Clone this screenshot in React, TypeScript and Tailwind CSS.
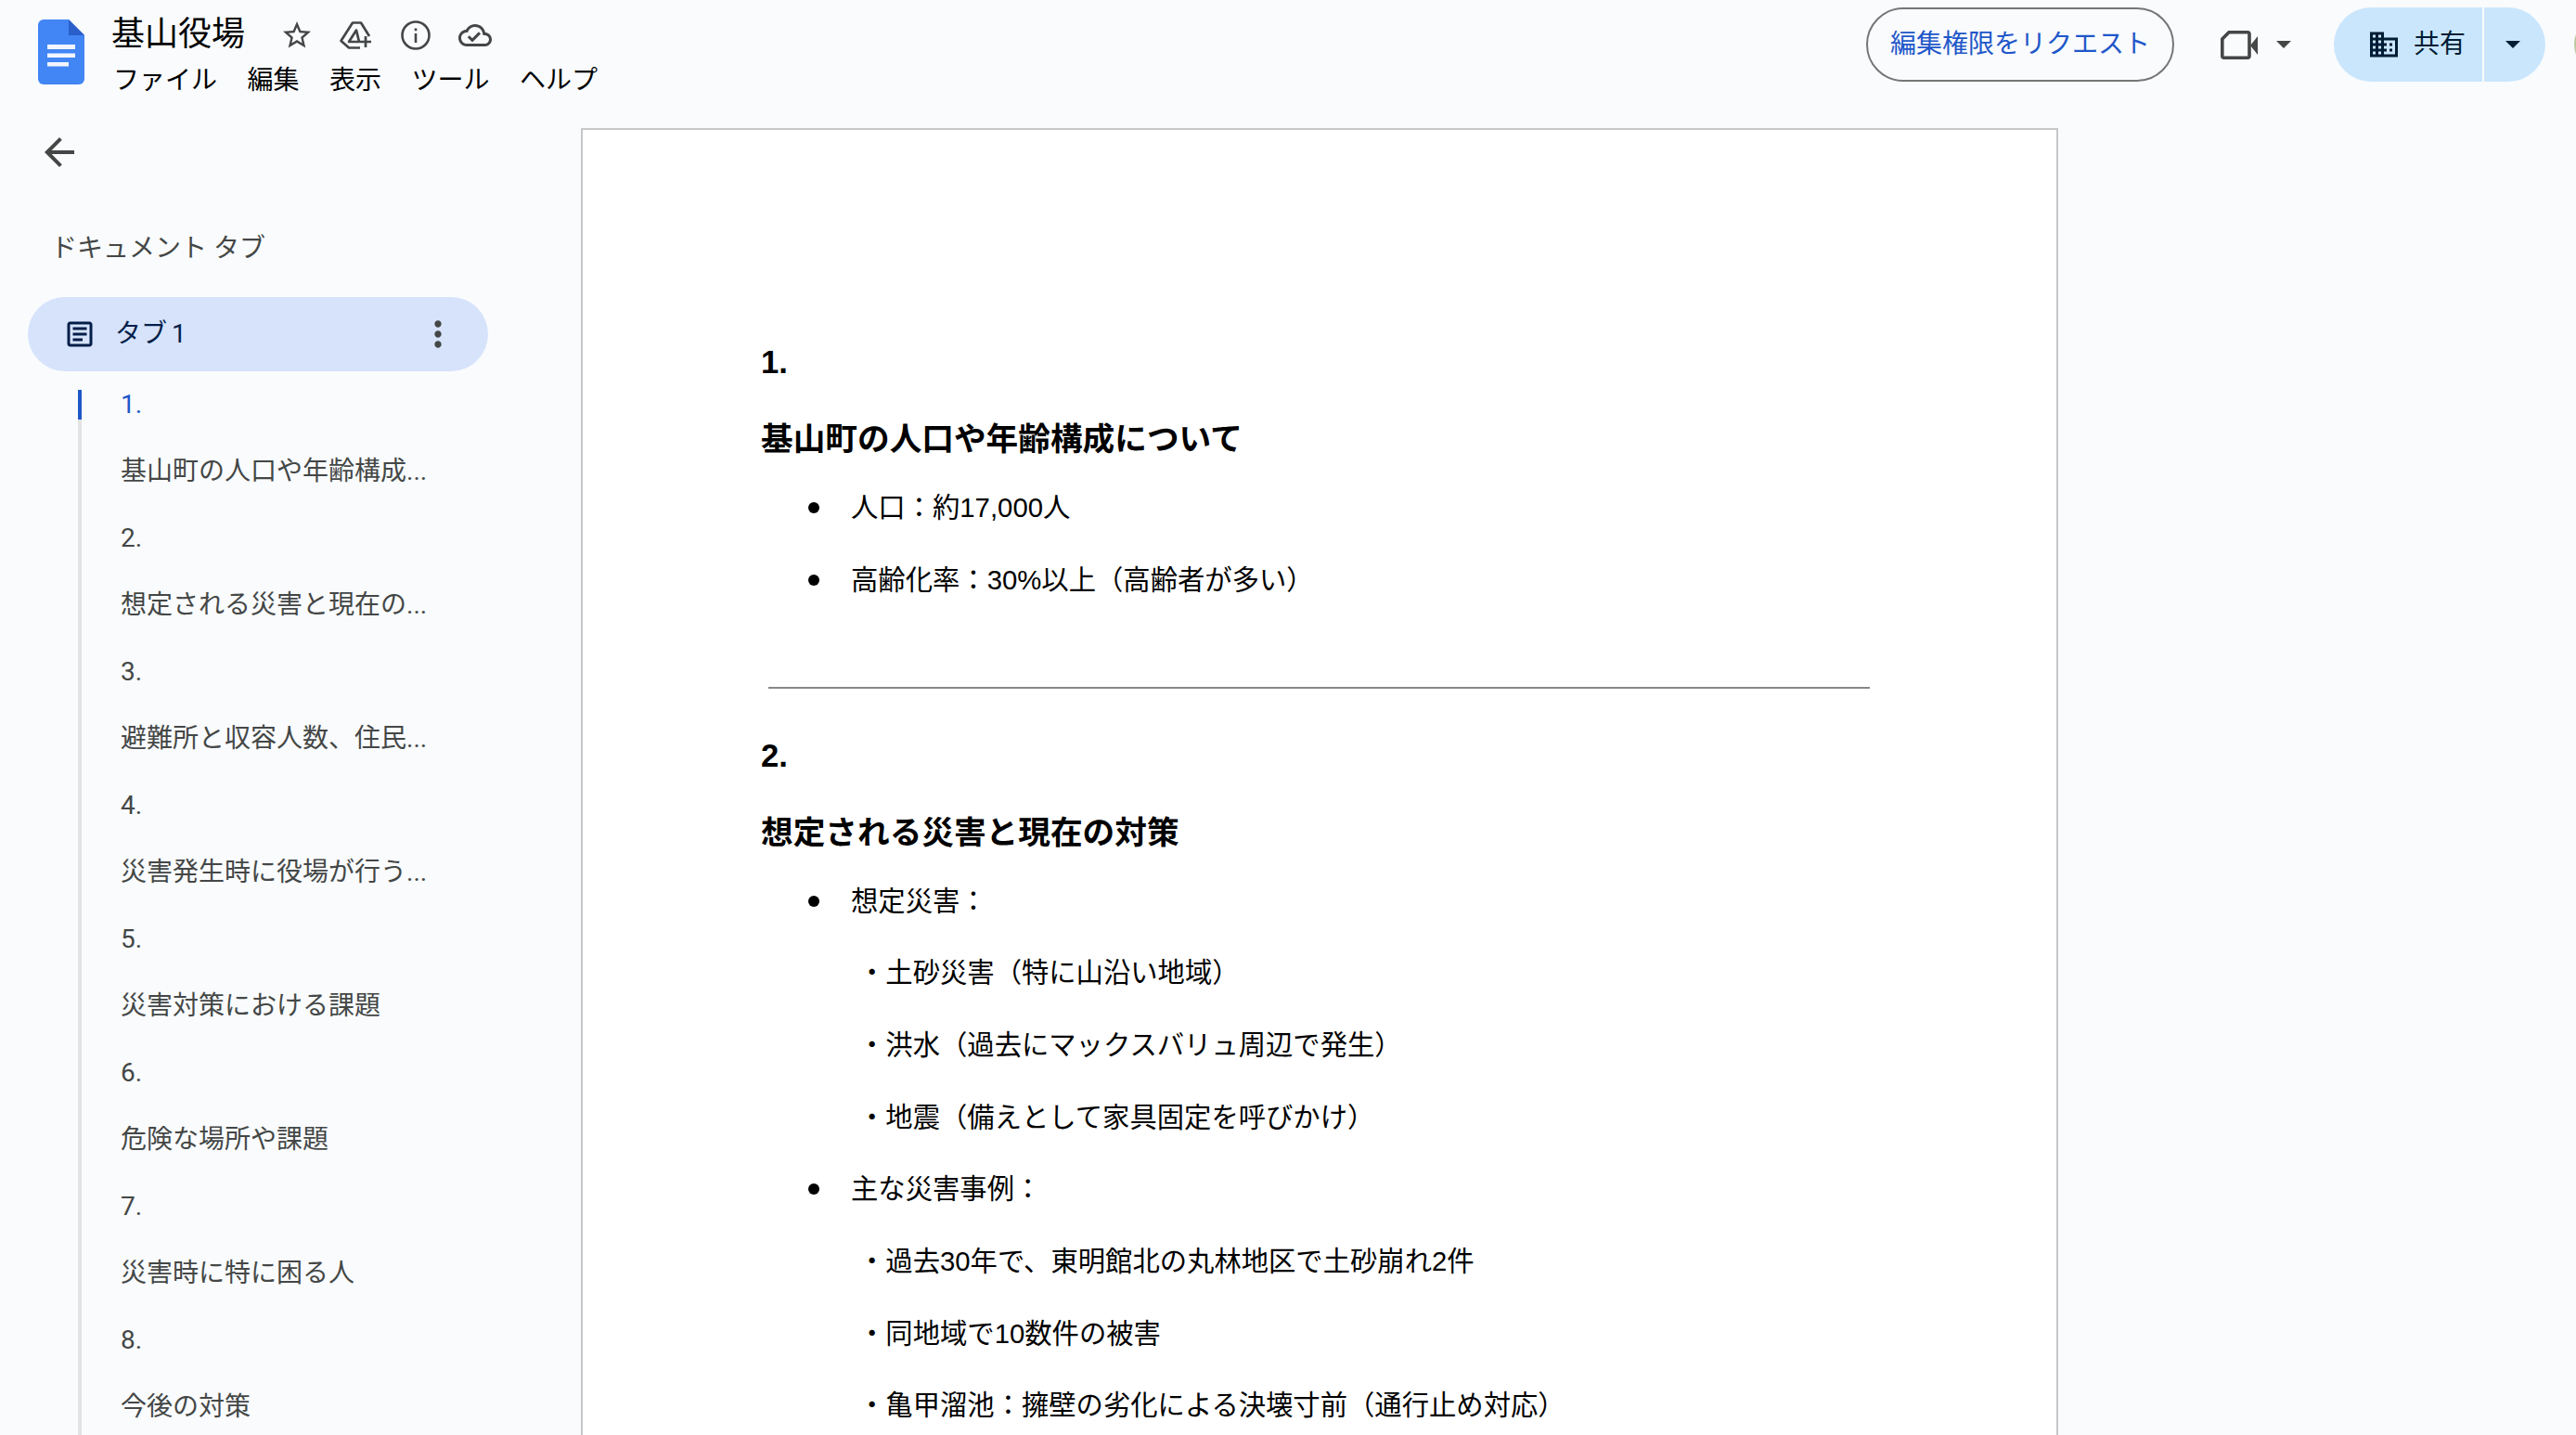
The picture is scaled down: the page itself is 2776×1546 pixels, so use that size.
const outline = [
  "1.",
  "基山町の人口や年齢構成...",
  "2.",
  "想定される災害と現在の...",
  "3.",
  "避難所と収容人数、住民...",
  "4.",
  "災害発生時に役場が行う...",
  "5.",
  "災害対策における課題",
  "6.",
  "危険な場所や課題",
  "7.",
  "災害時に特に困る人",
  "8.",
  "今後の対策",
];

const menus = ["ファイル", "編集", "表示", "ツール", "ヘルプ"];

function DocsLogo() {
  return (
    <svg viewBox="0 0 50 70" className="w-[50px] h-[70px] shrink-0">
      <path d="M0 6a6 6 0 0 1 6-6h27l17 17v47a6 6 0 0 1-6 6H6a6 6 0 0 1-6-6z" fill="#4285f4" />
      <path d="M33 0v17h17z" fill="#2a5fcb" />
      <path d="M10 27h30v5H10zM10 36.500h30v4.500H10zM10 46h23v4.500H10z" fill="#f1f5fe" />
    </svg>
  );
}

function Caret({ className }: { className: string }) {
  return (
    <svg viewBox="0 0 16 8" className={`w-4 h-2 shrink-0 ${className}`}>
      <path d="M0 0h16l-8 8z" fill="currentColor" />
    </svg>
  );
}

function Bullet({ children }: { children: string }) {
  return (
    <li className="flex items-center h-10 mb-[37.67px] pl-[51px]">
      <span className="w-3 h-3 rounded-full bg-black shrink-0" />
      <span className="ml-[34px]">{children}</span>
    </li>
  );
}

function SubItem({ children }: { children: string }) {
  return <li className="h-10 leading-10 mb-[37.67px] pl-[105px]">{children}</li>;
}

function Heading({ no, children }: { no: string; children: string }) {
  return (
    <>
      <h2 className="h-10 leading-10 font-bold text-[34.67px] mb-[43px]">{no}</h2>
      <h2 className="h-10 leading-10 font-bold text-[34.67px] mb-[34px]">{children}</h2>
    </>
  );
}

export default function App() {
  return (
    <div className="w-full h-[1546px] overflow-hidden flex flex-col bg-[#f9fbfd] font-['Roboto','Noto_Sans_CJK_JP',sans-serif]">
      <header className="h-[96px] shrink-0 flex items-start">
        <div className="ml-[41px] mt-[21px]">
          <DocsLogo />
        </div>
        <div className="ml-[29px] mt-[15px]">
          <div className="flex items-center h-[44px]">
            <span className="text-[36px] leading-[44px] text-black">基山役場</span>
            <div className="flex items-center ml-[24px] text-[#444746]">
              <span className="w-16 flex justify-center">
                <svg viewBox="0 0 24 24" className="w-9 h-9 mt-0.5" fill="currentColor">
                  <path d="M22 9.240l-7.190-.620L12 2 9.190 8.630 2 9.240l5.460 4.730L5.820 21 12 17.270 18.180 21l-1.630-7.030L22 9.240zM12 15.400l-3.760 2.270 1-4.280-3.320-2.880 4.380-.380L12 6.100l1.710 4.040 4.380.380-3.320 2.880 1 4.280L12 15.400z" />
                </svg>
              </span>
              <span className="w-16 flex justify-center">
                <svg viewBox="0 0 36 30" className="w-9 h-[30px] mt-0.5" fill="none" stroke="currentColor" strokeWidth="2.700">
                  <path d="M22 28.500H10L1.500 21 14 1.500h9L32 16" strokeLinejoin="round" />
                  <path d="M18 9.500L10 22h11z" strokeLinejoin="round" />
                  <path d="M28 16v12M22 22h12" />
                </svg>
              </span>
              <span className="w-16 flex justify-center">
                <svg viewBox="0 0 32 32" className="w-8 h-8 mt-0.5" fill="none" stroke="currentColor" strokeWidth="2.600">
                  <circle cx="16" cy="16" r="14.500" />
                  <path d="M16 14v10M16 8.500v2.800" />
                </svg>
              </span>
              <span className="w-16 flex justify-center">
                <svg viewBox="0 0 24 24" className="w-9 h-9 mt-0.5" fill="currentColor">
                  <path d="M19.350 10.040C18.670 6.590 15.640 4 12 4 9.110 4 6.600 5.640 5.350 8.040 2.340 8.360 0 10.910 0 14c0 3.310 2.690 6 6 6h13c2.760 0 5-2.240 5-5 0-2.640-2.050-4.780-4.650-4.960zM19 18H6c-2.210 0-4-1.790-4-4 0-2.050 1.530-3.760 3.560-3.970l1.070-.110.500-.950C8.080 7.140 9.940 6 12 6c2.620 0 4.880 1.860 5.390 4.430l.300 1.500 1.530.110c1.560.100 2.780 1.410 2.780 2.960 0 1.650-1.350 3-3 3zm-9-3.820l-2.090-2.090L6.500 13.500 10 17l6.010-6.010-1.410-1.410z" />
                </svg>
              </span>
            </div>
          </div>
          <nav className="flex gap-[32.500px] ml-[2px] mt-[10px] text-[28px] leading-[36px] text-black">
            {menus.map((m) => (
              <span key={m}>{m}</span>
            ))}
          </nav>
        </div>

        <div className="ml-auto mt-2 flex items-center -mr-[62px]">
          <button className="h-20 w-[332px] rounded-full border-2 border-[#747775] text-[#1f57c9] text-[28px]">
            編集権限をリクエスト
          </button>
          <svg viewBox="0 0 40 31" className="w-10 h-[31px] ml-[50px] text-[#444746]">
            <path d="M9 1.800h20a2 2 0 0 1 2 2v23.400a2 2 0 0 1-2 2H3.800a2 2 0 0 1-2-2V9z" fill="none" stroke="currentColor" strokeWidth="3.600" />
            <path d="M32 16l8-10v20z" fill="currentColor" />
          </svg>
          <Caret className="ml-5 text-[#444746]" />
          <div className="flex ml-[46px] h-20 text-[#001d35]">
            <div className="w-[160px] bg-[#cae6fd] rounded-l-full flex items-center pl-[36px]">
              <svg viewBox="0 0 24 24" className="w-9 h-9" fill="currentColor">
                <path d="M12 7V3H2v18h20V7H12zM6 19H4v-2h2v2zm0-4H4v-2h2v2zm0-4H4V9h2v2zm0-4H4V5h2v2zm4 12H8v-2h2v2zm0-4H8v-2h2v2zm0-4H8V9h2v2zm0-4H8V5h2v2zm10 12h-8v-2h2v-2h-2v-2h2v-2h-2V9h8v10zm-2-8h-2v2h2v-2zm0 4h-2v2h2v-2z" />
              </svg>
              <span className="ml-[14px] text-[28px]">共有</span>
            </div>
            <div className="w-[66px] ml-[2px] bg-[#cae6fd] rounded-r-full flex items-center pl-[23px]">
              <Caret className="" />
            </div>
          </div>
          <div className="w-16 h-16 ml-[31px] rounded-full bg-gradient-to-b from-[#9db56a] to-[#dcdcd0] shrink-0" />
        </div>
      </header>

      <main className="flex-1 min-h-0 flex">
        <aside className="w-[626px] shrink-0 flex flex-col">
          <svg viewBox="0 0 24 24" className="w-12 h-12 ml-[40px] mt-[44px] text-[#444746]" fill="currentColor">
            <path d="M20 11H7.830l5.590-5.590L12 4l-8 8 8 8 1.410-1.410L7.830 13H20v-2z" />
          </svg>
          <div className="ml-[55px] mt-[60px] h-10 leading-10 text-[28px] text-[#444746]">ドキュメント タブ</div>
          <div className="ml-[30px] mt-[32px] w-[496px] h-20 shrink-0 rounded-full bg-[#d6e3fb] flex items-center text-[#041e49]">
            <svg viewBox="0 0 24 24" className="w-9 h-9 ml-[38px]" fill="currentColor">
              <path d="M19 5v14H5V5h14m0-2H5c-1.100 0-2 .900-2 2v14c0 1.100.900 2 2 2h14c1.100 0 2-.900 2-2V5c0-1.100-.900-2-2-2zM14 17H7v-2h7v2zm3-4H7v-2h10v2zm0-4H7V7h10v2z" />
            </svg>
            <span className="ml-[20px] text-[28px] [word-spacing:-2px]">タブ 1</span>
            <svg viewBox="0 0 24 24" className="w-11 h-11 ml-auto mr-[32px] text-[#444746]" fill="currentColor">
              <path d="M12 8c1.100 0 2-.900 2-2s-.900-2-2-2-2 .900-2 2 .900 2 2 2zm0 2c-1.100 0-2 .900-2 2s.900 2 2 2 2-.900 2-2-.900-2-2-2zm0 6c-1.100 0-2 .900-2 2s.900 2 2 2 2-.900 2-2-.900-2-2-2z" />
            </svg>
          </div>
          <ul className="relative ml-[84px] mt-[20px] flex-1 border-l-4 border-[#e3e3e3] pl-[42px] flex flex-col gap-[40px] text-[28px] leading-[32px] text-[#444746]">
            <span className="absolute -left-1 top-0 w-1 h-8 bg-[#1f57c9]" />
            {outline.map((t, i) => (
              <li key={i} className={`h-8 whitespace-nowrap ${i === 0 ? "text-[#1f57c9]" : ""}`}>
                {t}
              </li>
            ))}
          </ul>
        </aside>

        <section className="w-[1592px] shrink-0 mt-[42px] bg-white border-2 border-b-0 border-[#c7c7c7] pl-[192px] pt-[230px] text-black text-[29.33px] font-['Liberation_Sans','Noto_Sans_CJK_JP',sans-serif]">
          <Heading no="1.">基山町の人口や年齢構成について</Heading>
          <ul>
            <Bullet>人口：約17,000人</Bullet>
            <Bullet>高齢化率：30%以上（高齢者が多い）</Bullet>
          </ul>
          <hr className="ml-[8px] mr-[201px] mt-[95px] mb-[52px] border-t-2 border-[#888888]" />
          <Heading no="2.">想定される災害と現在の対策</Heading>
          <ul>
            <Bullet>想定災害：</Bullet>
            <SubItem>・土砂災害（特に山沿い地域）</SubItem>
            <SubItem>・洪水（過去にマックスバリュ周辺で発生）</SubItem>
            <SubItem>・地震（備えとして家具固定を呼びかけ）</SubItem>
            <Bullet>主な災害事例：</Bullet>
            <SubItem>・過去30年で、東明館北の丸林地区で土砂崩れ2件</SubItem>
            <SubItem>・同地域で10数件の被害</SubItem>
            <SubItem>・亀甲溜池：擁壁の劣化による決壊寸前（通行止め対応）</SubItem>
          </ul>
        </section>
      </main>
    </div>
  );
}
